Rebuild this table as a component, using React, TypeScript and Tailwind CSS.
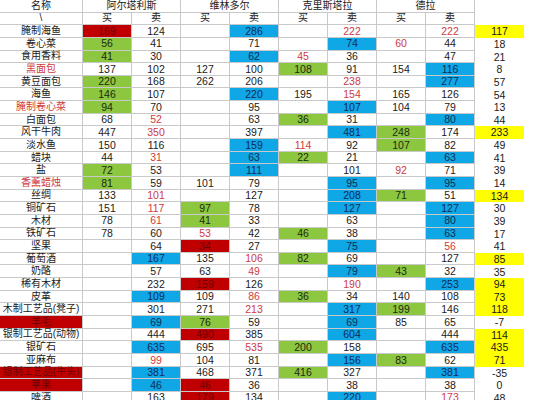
import React from 'react';

// 名称 + 9 value columns; suffix: g green, b blue, r red text, R red fill, y yellow
const rows: [string, string, string[]][] = [
  ['腌制海鱼', '', ['169R', '124', '', '286b', '', '222r', '', '222r', '117y']],
  ['卷心菜', '', ['56g', '41', '', '71', '', '74b', '60r', '44', '18']],
  ['食用香料', '', ['41g', '30', '', '62b', '45r', '36', '', '47', '21']],
  ['黑面包', 'r', ['137', '102', '127', '100', '108g', '91', '154', '116b', '8']],
  ['黄豆面包', '', ['220g', '168', '262', '206', '', '238r', '', '277b', '57']],
  ['海鱼', '', ['146g', '107', '', '220b', '195', '154r', '165', '126', '54']],
  ['腌制卷心菜', 'r', ['94g', '70', '', '95', '', '107b', '104', '79', '13']],
  ['白面包', '', ['68', '52r', '', '63', '36g', '31', '', '80b', '44']],
  ['风干牛肉', '', ['447', '350r', '', '397', '', '481b', '248g', '174', '233y']],
  ['淡水鱼', '', ['150', '116', '', '159b', '114r', '92', '107g', '82', '49']],
  ['蜡块', '', ['44', '31r', '', '63b', '22g', '21', '', '63b', '41']],
  ['盐', '', ['72g', '53', '', '111b', '', '101', '92r', '71', '39']],
  ['香薰蜡烛', 'r', ['81g', '59', '101', '79', '', '95b', '', '95b', '14']],
  ['丝绸', '', ['133', '101r', '', '127', '', '208b', '71g', '51', '134y']],
  ['铜矿石', '', ['151', '117r', '97g', '78', '', '127b', '', '127b', '30']],
  ['木材', '', ['78', '61r', '41g', '33', '', '63', '', '80b', '39']],
  ['铁矿石', '', ['78', '60', '53r', '42', '46g', '38', '', '63b', '17']],
  ['坚果', '', ['', '64', '34R', '27', '', '75b', '', '56r', '41']],
  ['葡萄酒', '', ['', '167b', '135', '106r', '82g', '69', '', '127', '85y']],
  ['奶酪', '', ['', '57', '63', '49r', '', '79b', '43g', '32', '35']],
  ['稀有木材', '', ['', '232', '159R', '126', '', '190r', '', '253b', '94y']],
  ['皮革', '', ['', '109b', '109', '86r', '36g', '34', '140', '108', '73y']],
  ['木制工艺品(凳子)', '', ['', '301', '271', '213r', '', '317b', '199g', '146', '118y']],
  ['羊毛', 'R', ['', '69b', '76g', '59', '', '69b', '85', '65', '-7']],
  ['银制工艺品(动物)', '', ['', '444', '490R', '385', '', '604b', '', '444', '114y']],
  ['银矿石', '', ['', '635b', '695', '535r', '200g', '158', '', '635b', '435y']],
  ['亚麻布', '', ['', '99r', '104', '81', '', '156b', '83g', '62', '71y']],
  ['银制工艺品(牛头)', 'R', ['', '381b', '468', '371', '416g', '327', '', '381b', '-35']],
  ['苹果', 'R', ['', '46b', '46R', '36', '', '38', '', '38', '0']],
  ['啤酒', '', ['', '163', '179R', '134', '', '220b', '', '173r', '48']],
];

const cities = ['阿尔塔利斯', '维林多尔', '克里斯塔拉', '德拉'];

const tone: Record<string, string> = {
  '': 'text-[#1a1a1a]',
  g: 'bg-[#8dc63f] text-[#1c2a12]',
  b: 'bg-[#0fa7e6] text-[#0e2c55]',
  r: 'text-[#cf3a3e]',
  R: 'bg-[#c00000] text-[#6e0000]',
  y: 'bg-[#ffff00] text-[#1a1a1a]',
};

const line = 'border-r border-b border-[#c9c9c9]';

function split(v: string): [string, string] {
  const last = v.slice(-1);
  if (/[gbrRy]/.test(last)) return [v.slice(0, -1), last];
  return [v, ''];
}

export default function App() {
  return (
    <div className="w-[540px] h-[400px] overflow-hidden bg-white" style={{ fontFamily: '"Liberation Sans", "Noto Sans CJK SC", sans-serif' }}>
      <div className="grid grid-cols-[83px_repeat(9,49px)] auto-rows-[12.65px] leading-none">
        <div className={`${line} flex items-center justify-center text-[10px] text-[#1a1a1a]`}>名称</div>
        {cities.map((c) => (
          <div key={c} className={`${line} col-span-2 flex items-center justify-center text-[10px] text-[#1a1a1a]`}>{c}</div>
        ))}
        <div />

        <div className={`${line} flex items-center justify-center text-[10px] text-[#1a1a1a]`}>\</div>
        {cities.map((c) => (
          <React.Fragment key={c}>
            <div className={`${line} flex items-center justify-center text-[10px] text-[#1a1a1a]`}>买</div>
            <div className={`${line} flex items-center justify-center text-[10px] text-[#1a1a1a]`}>卖</div>
          </React.Fragment>
        ))}
        <div />

        {rows.map(([name, ns, vals]) => (
          <React.Fragment key={name}>
            <div className={`${line} flex items-center justify-center text-[10px] whitespace-nowrap ${tone[ns]}`}>{name}</div>
            {vals.map((v, i) => {
              const [txt, t] = split(v);
              const last = i === 8;
              return (
                <div
                  key={i}
                  className={`${last ? '' : line} flex items-center justify-center text-[10.5px] ${tone[t]}`}
                >
                  {txt}
                </div>
              );
            })}
          </React.Fragment>
        ))}
      </div>
    </div>
  );
}
